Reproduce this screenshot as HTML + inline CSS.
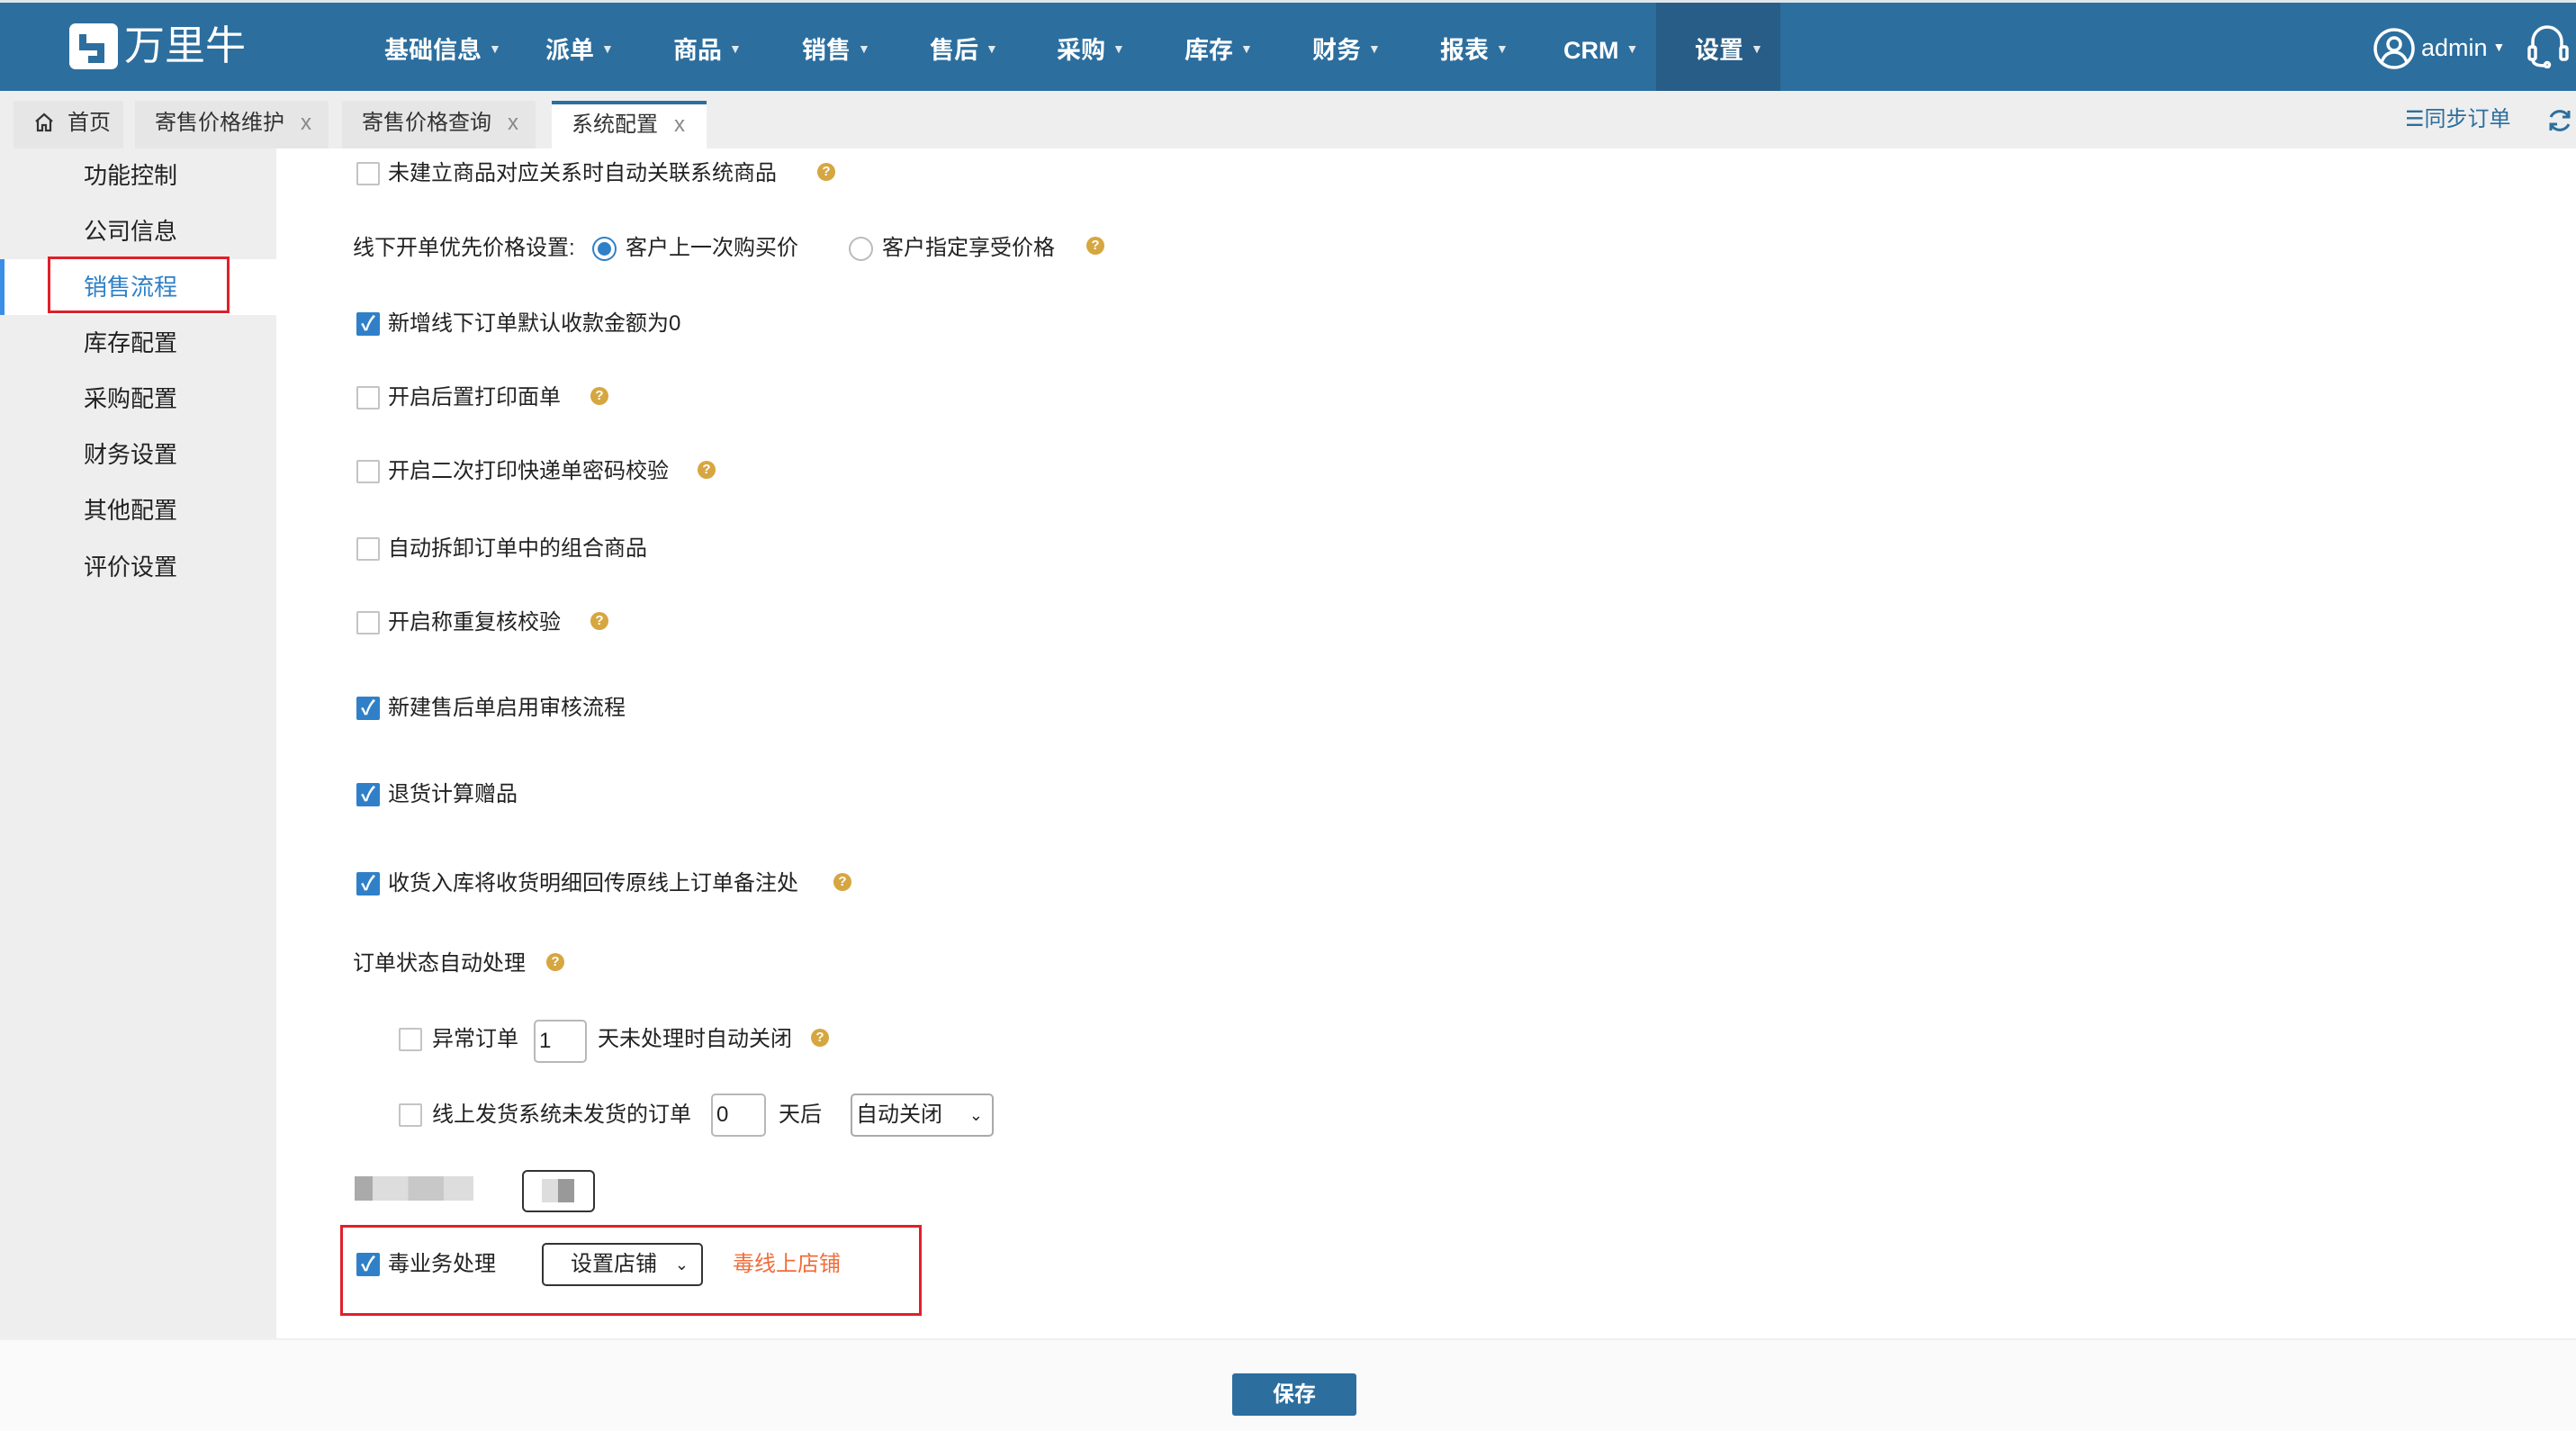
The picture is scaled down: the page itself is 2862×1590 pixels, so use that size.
<!DOCTYPE html>
<html><head><meta charset="utf-8"><style>
*{margin:0;padding:0;box-sizing:border-box}
body{width:2862px;height:1590px;position:relative;overflow:hidden;background:#fff;font-family:"Liberation Sans","Noto Sans CJK SC",sans-serif;color:#222}
.a{position:absolute;white-space:nowrap}
.hdr{left:0;top:0;width:2862px;height:101px;background:#2c6e9e;border-top:3px solid #dfe6ec}
.nav{top:34px;font-size:27px;color:#fff;font-weight:bold;line-height:40px}
.nav i{font-style:normal;font-size:14px;margin-left:8px;vertical-align:6px;opacity:.85}
.tabbar{left:0;top:101px;width:2862px;height:64px;background:#eeeeee}
.tab{top:112px;height:53px;background:#e6e6e6;font-size:24px;line-height:50px;color:#333;padding-left:22px}
.tab b{font-weight:normal;color:#888;margin-left:18px}
.side{left:0;top:165px;width:307px;height:1322px;background:#eeeeee}
.si{left:93px;font-size:26px;line-height:40px;color:#222}
.t{font-size:24px;line-height:36px;color:#222}
.cb{width:26px;height:26px;border:2px solid #c4c4c4;background:#fff;border-radius:2px}
.cbx{width:26px;height:26px;background:#2f80c8;border-radius:2px;color:#fff;font-size:22px;line-height:26px;text-align:center;font-weight:bold}
.q{width:20px;height:20px;border-radius:50%;background:#d6a640;color:#fff;font-size:15px;line-height:20px;text-align:center;font-weight:bold}
.inp{border:2px solid #b8b8b8;border-radius:5px;background:#fff;font-size:24px;line-height:44px;padding-left:4px}
.sel{border:2px solid #aaa;border-radius:5px;background:#fff;font-size:24px;line-height:44px;padding-left:4px}
</style></head><body>
<div class="a hdr"></div>
<div class="a" style="left:77px;top:26px;width:54px;height:51px;background:#fff;border-radius:7px"></div>
<div class="a" style="left:88px;top:38px;width:8px;height:18px;background:#2c6e9e"></div>
<div class="a" style="left:88px;top:48px;width:28px;height:8px;background:#2c6e9e"></div>
<div class="a" style="left:108px;top:48px;width:8px;height:22px;background:#2c6e9e"></div>
<div class="a" style="left:98px;top:62px;width:18px;height:8px;background:#2c6e9e"></div>
<div class="a" style="left:138px;top:24px;font-size:45px;line-height:54px;color:#fff">万里牛</div>
<div class="a" style="left:1840px;top:3px;width:138px;height:98px;background:#275d87"></div>
<div class="a nav" style="left:427px">基础信息<i>▼</i></div>
<div class="a nav" style="left:606px">派单<i>▼</i></div>
<div class="a nav" style="left:748px">商品<i>▼</i></div>
<div class="a nav" style="left:891px">销售<i>▼</i></div>
<div class="a nav" style="left:1033px">售后<i>▼</i></div>
<div class="a nav" style="left:1174px">采购<i>▼</i></div>
<div class="a nav" style="left:1316px">库存<i>▼</i></div>
<div class="a nav" style="left:1458px">财务<i>▼</i></div>
<div class="a nav" style="left:1600px">报表<i>▼</i></div>
<div class="a nav" style="left:1737px">CRM<i>▼</i></div>
<div class="a nav" style="left:1883px">设置<i>▼</i></div>
<svg class="a" style="left:2636px;top:30px" width="48" height="48" viewBox="0 0 48 48" fill="none" stroke="#fff" stroke-width="3.5"><circle cx="24" cy="24" r="21"/><circle cx="24" cy="19" r="7"/><path d="M10 39c3-8 8-11 14-11s11 3 14 11"/></svg>
<div class="a" style="left:2690px;top:32px;font-size:27px;color:#fff;line-height:40px">admin<span style="font-size:14px;margin-left:6px;vertical-align:5px">▼</span></div>
<svg class="a" style="left:2806px;top:28px" width="50" height="48" viewBox="0 0 50 48" fill="none" stroke="#fff" stroke-width="3.5"><path d="M8 26V18a16 16 0 0 1 32 0v8"/><rect x="4" y="24" width="7" height="14" rx="2"/><rect x="39" y="24" width="7" height="14" rx="2"/><path d="M8 38c0 6 6 7 14 7"/><circle cx="24" cy="44" r="2.5"/></svg>
<div class="a tabbar"></div>
<div class="a tab" style="left:15px;width:122px">
<svg width="24" height="24" viewBox="0 0 24 24" fill="none" stroke="#333" stroke-width="2.2" style="vertical-align:-4px;margin-right:14px"><path d="M3 11L12 3l9 8M5 9v12h5v-6h4v6h5V9"/></svg>首页</div>
<div class="a tab" style="left:150px;width:215px">寄售价格维护<b>x</b></div>
<div class="a tab" style="left:380px;width:215px">寄售价格查询<b>x</b></div>
<div class="a tab" style="left:613px;width:172px;background:#fff;border-top:4px solid #2c6e9e;line-height:46px">系统配置<b>x</b></div>
<div class="a" style="left:2672px;top:115px;font-size:24px;color:#2c6e9e;line-height:36px">☰同步订单</div>
<svg class="a" style="left:2828px;top:118px" width="32" height="32" viewBox="0 0 32 32" fill="none" stroke="#2c6e9e" stroke-width="3"><path d="M26 12A11 11 0 0 0 6 12M6 20a11 11 0 0 0 20 0"/><path d="M26 5v7h-7M6 27v-7h7"/></svg>
<div class="a side"></div>
<div class="a" style="left:0;top:288px;width:307px;height:62px;background:#fff;border-left:5px solid #3a8ee6"></div>
<div class="a" style="left:53px;top:285px;width:202px;height:63px;border:3px solid #e0202a"></div>
<div class="a si" style="top:175px">功能控制</div>
<div class="a si" style="top:237px">公司信息</div>
<div class="a si" style="top:299px;color:#2f80c8">销售流程</div>
<div class="a si" style="top:361px">库存配置</div>
<div class="a si" style="top:423px">采购配置</div>
<div class="a si" style="top:485px">财务设置</div>
<div class="a si" style="top:547px">其他配置</div>
<div class="a si" style="top:610px">评价设置</div>

<div class="a cb" style="left:396px;top:180px"></div><div class="a t" style="left:431px;top:175px">未建立商品对应关系时自动关联系统商品</div><div class="a q" style="left:908px;top:181px">?</div>
<div class="a t" style="left:392px;top:258px">线下开单优先价格设置:</div>
<div class="a" style="left:658px;top:263px;width:27px;height:27px;border-radius:50%;border:2px solid #2f80c8;background:#fff"><div style="margin:4px;width:15px;height:15px;border-radius:50%;background:#2f80c8"></div></div>
<div class="a t" style="left:695px;top:258px">客户上一次购买价</div>
<div class="a" style="left:943px;top:263px;width:27px;height:27px;border-radius:50%;border:2px solid #bbb;background:#fff"></div>
<div class="a t" style="left:980px;top:258px">客户指定享受价格</div><div class="a q" style="left:1207px;top:263px">?</div>
<div class="a cbx" style="left:396px;top:347px">✓</div><div class="a t" style="left:431px;top:342px">新增线下订单默认收款金额为0</div>
<div class="a cb" style="left:396px;top:429px"></div><div class="a t" style="left:431px;top:424px">开启后置打印面单</div><div class="a q" style="left:656px;top:430px">?</div>
<div class="a cb" style="left:396px;top:511px"></div><div class="a t" style="left:431px;top:506px">开启二次打印快递单密码校验</div><div class="a q" style="left:775px;top:512px">?</div>
<div class="a cb" style="left:396px;top:597px"></div><div class="a t" style="left:431px;top:592px">自动拆卸订单中的组合商品</div>
<div class="a cb" style="left:396px;top:679px"></div><div class="a t" style="left:431px;top:674px">开启称重复核校验</div><div class="a q" style="left:656px;top:680px">?</div>
<div class="a cbx" style="left:396px;top:774px">✓</div><div class="a t" style="left:431px;top:769px">新建售后单启用审核流程</div>
<div class="a cbx" style="left:396px;top:870px">✓</div><div class="a t" style="left:431px;top:865px">退货计算赠品</div>
<div class="a cbx" style="left:396px;top:969px">✓</div><div class="a t" style="left:431px;top:964px">收货入库将收货明细回传原线上订单备注处</div><div class="a q" style="left:926px;top:970px">?</div>
<div class="a t" style="left:392px;top:1053px">订单状态自动处理</div><div class="a q" style="left:607px;top:1059px">?</div>
<div class="a cb" style="left:443px;top:1142px"></div><div class="a t" style="left:480px;top:1137px">异常订单</div>
<div class="a inp" style="left:593px;top:1133px;width:59px;height:48px">1</div>
<div class="a t" style="left:664px;top:1137px">天未处理时自动关闭</div><div class="a q" style="left:901px;top:1143px">?</div>
<div class="a cb" style="left:443px;top:1226px"></div><div class="a t" style="left:480px;top:1221px">线上发货系统未发货的订单</div>
<div class="a inp" style="left:790px;top:1215px;width:61px;height:48px">0</div>
<div class="a t" style="left:865px;top:1221px">天后</div>
<div class="a sel" style="left:945px;top:1215px;width:159px;height:48px">自动关闭<span style="position:absolute;right:10px;font-size:18px">⌄</span></div>
<div class="a" style="left:394px;top:1307px;width:132px;height:27px;background:linear-gradient(90deg,#aaa 0 15%,#ddd 15% 45%,#c8c8c8 45% 75%,#ddd 75%)"></div>
<div class="a" style="left:580px;top:1300px;width:81px;height:47px;border:2px solid #333;border-radius:6px;background:#fff"><div style="margin:8px 0 0 20px;width:36px;height:26px;background:linear-gradient(90deg,#ddd 50%,#999 50%)"></div></div>
<div class="a" style="left:378px;top:1361px;width:646px;height:101px;border:3px solid #e0202a"></div>
<div class="a cbx" style="left:396px;top:1392px">✓</div><div class="a t" style="left:431px;top:1387px">毒业务处理</div>
<div class="a sel" style="left:602px;top:1381px;width:179px;height:48px;border-color:#333;padding-left:30px">设置店铺<span style="position:absolute;right:14px;font-size:18px">⌄</span></div>
<div class="a t" style="left:814px;top:1387px;color:#f26b3a">毒线上店铺</div>
<div class="a" style="left:0;top:1487px;width:2862px;height:103px;background:#fafafa;border-top:2px solid #f0f0f0"></div>
<div class="a" style="left:1369px;top:1526px;width:138px;height:47px;background:#2c6e9e;border-radius:3px;color:#fff;font-size:24px;font-weight:bold;text-align:center;line-height:47px">保存</div>
</body></html>
